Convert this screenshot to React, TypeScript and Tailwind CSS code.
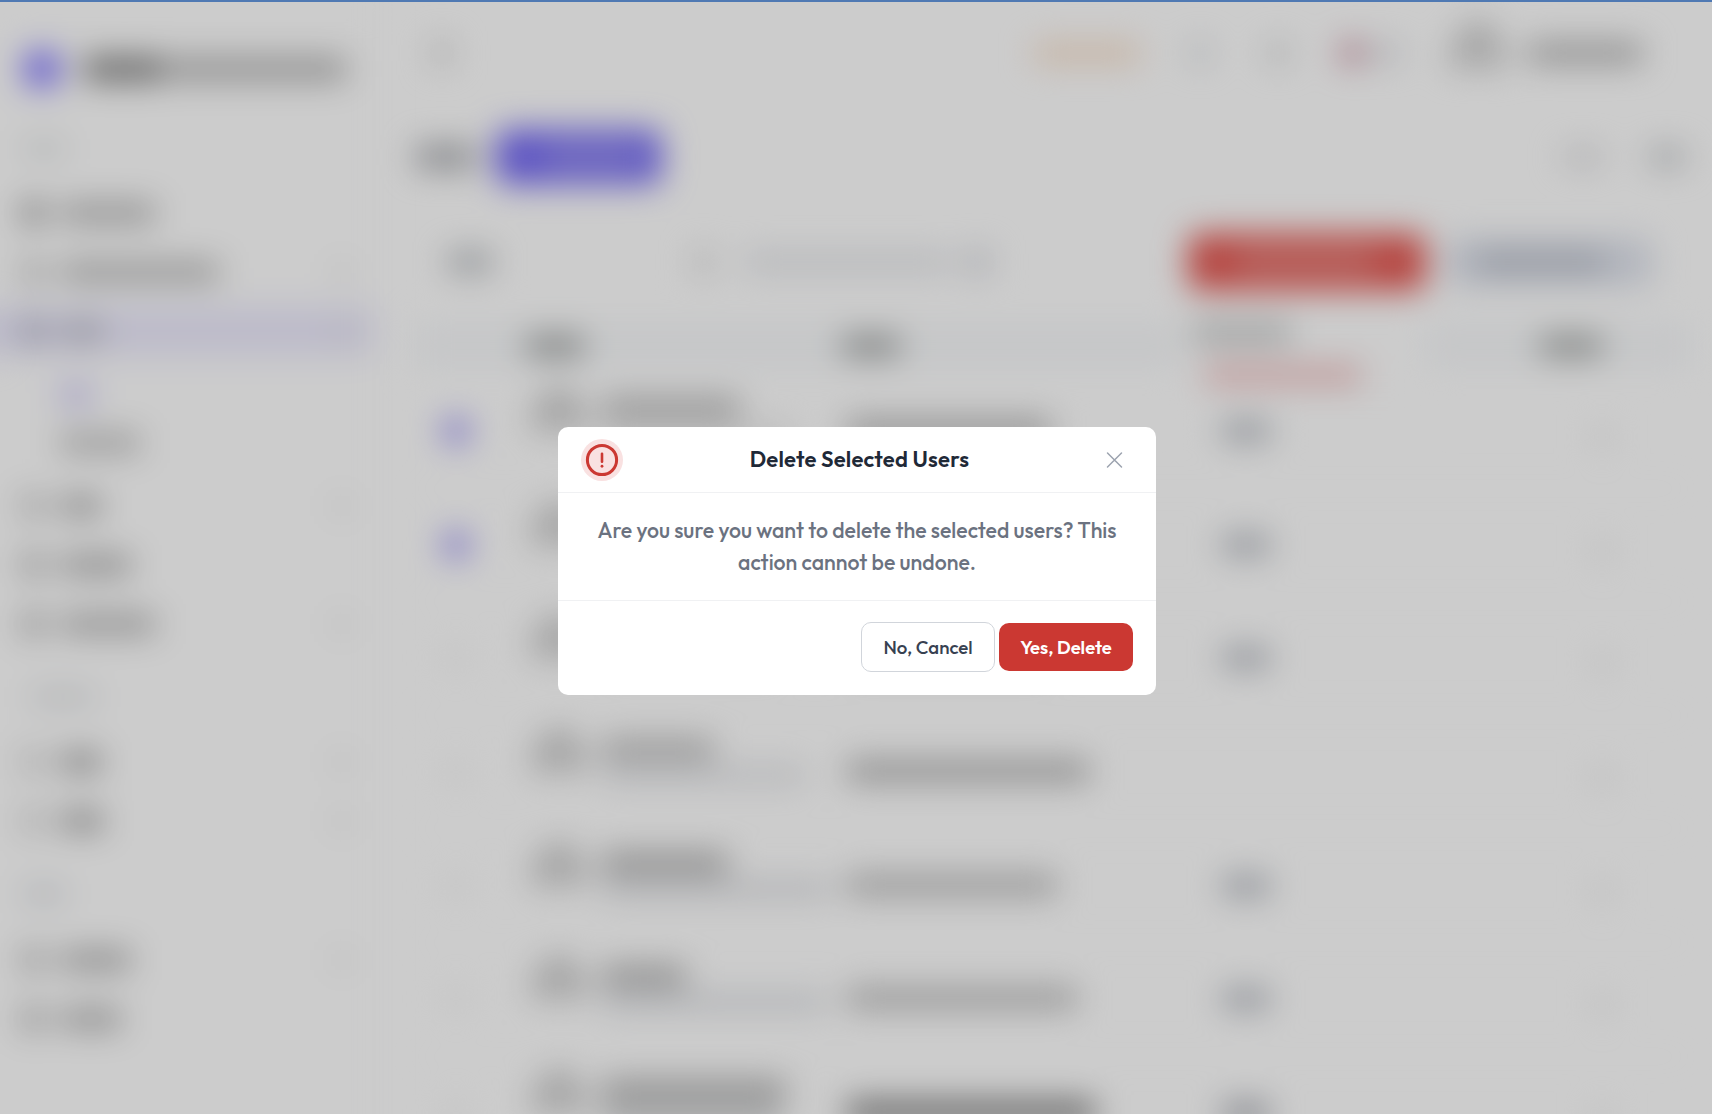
import React from "react";

/* Soft block standing in for an obscured element behind the backdrop. */
function Bar({ className = "" }: { className?: string }) {
  return <span aria-hidden="true" className={`block shrink-0 ${className}`} />;
}

function NavRow({ icon, label, active, chevron }: { icon: string; label: string; active?: boolean; chevron?: boolean }) {
  return (
    <div className="flex h-[59px] items-center">
      <div className={`flex h-[48px] w-[373px] items-center pl-[21px] ${active ? "bg-[#eceafd] shadow-[-40px_0_0_#eceafd]" : ""}`}>
        <Bar className={`h-6 w-6 ${icon}`} />
        <Bar className={`ml-4 h-5 ${label}`} />
        {chevron && <Bar className="mr-[25px] ml-auto h-3 w-3 bg-[#dcdcdc]" />}
      </div>
    </div>
  );
}

function Sidebar() {
  return (
    <aside className="h-full w-[380px] shrink-0 border-r border-[#f3f3f5] bg-white pt-px">
      <div className="flex h-[136px] items-center pl-[24px]">
        <Bar className="h-9 w-9 rounded-xl bg-[#8075ff]" />
        <Bar className="ml-6 h-6 w-[80px] bg-[#808080]" />
        <Bar className="ml-1 h-6 w-[178px] bg-[#b6b6b6]" />
      </div>
      <div className="flex h-[46px] items-start pt-1.5 pl-6">
        <Bar className="h-3 w-10 bg-[#d8dcdd]" />
      </div>
      <NavRow icon="bg-[#a4a4a4]" label="w-[94px] bg-[#b4b4b4]" />
      <NavRow icon="bg-[#cacaca]" label="w-[158px] bg-[#b8b8b8]" chevron />
      <NavRow icon="bg-[#b8b8c8]" label="w-[42px] bg-[#bcbcc8]" active chevron />
      <div className="flex h-[116px] flex-col gap-7 pt-[25px] pl-[60px]">
        <Bar className="h-5 w-8 bg-[#ccc6f8]" />
        <Bar className="h-5 w-20 bg-[#c0c0c0]" />
      </div>
      <NavRow icon="bg-[#c9c9c9]" label="w-[40px] bg-[#acacac]" chevron />
      <NavRow icon="bg-[#bcbcbc]" label="w-[70px] bg-[#b0b0b0]" />
      <NavRow icon="bg-[#bababa]" label="w-[94px] bg-[#b4b4b4]" chevron />
      <div className="flex h-[79px] items-center pt-2 pl-8">
        <Bar className="h-3 w-[62px] bg-[#d6d9dc]" />
      </div>
      <NavRow icon="bg-[#d8d8d8]" label="w-[40px] bg-[#a4a4a4]" chevron />
      <NavRow icon="bg-[#d8d8d8]" label="w-[42px] bg-[#a4a4a4]" chevron />
      <div className="flex h-[80px] items-center pt-2 pl-6">
        <Bar className="h-3 w-10 bg-[#d0d4da]" />
      </div>
      <NavRow icon="bg-[#c0c0c0]" label="w-[70px] bg-[#b0b0b0]" chevron />
      <NavRow icon="bg-[#bababa]" label="w-[60px] bg-[#b0b0b0]" />
    </aside>
  );
}

function TopBar() {
  return (
    <header className="flex h-[106px] items-center pr-[70px] pl-[52px]">
      <Bar className="h-6 w-5 bg-[#d8d8d8]" />
      <Bar className="ml-auto h-5 w-[106px] bg-[#f9e0ca]" />
      <Bar className="ml-[52px] h-5 w-4 bg-[#d3d8dc]" />
      <Bar className="ml-[60px] h-5 w-5 bg-[#d4d6d6]" />
      <Bar className="ml-[52px] h-6 w-6 rounded-full bg-[#c8889a]" />
      <Bar className="ml-2 h-4 w-7 bg-[#d6d8dd]" />
      <div className="ml-[48px] flex flex-col items-center pb-4">
        <Bar className="h-6 w-10 rounded-t-full bg-[#cccccc]" />
        <Bar className="h-6 w-[60px] bg-[#d4d4d4]" />
      </div>
      <Bar className="ml-5 h-5 w-[114px] bg-[#b0b0b0]" />
    </header>
  );
}

function TitleRow() {
  return (
    <div className="flex h-[101px] items-center pr-[27px] pl-[36px]">
      <Bar className="h-6 w-[60px] bg-[#aaacb1]" />
      <Bar className="ml-[20px] h-[56px] w-[48px] rounded-l-xl bg-[#766bf4]" />
      <div className="flex h-[56px] w-[118px] items-center rounded-r-xl bg-[#7a70f4]">
        <Bar className="h-4 w-[92px] bg-[#9d96ee]" />
      </div>
      <Bar className="ml-auto h-3.5 w-10 bg-[#d6d6d9]" />
      <Bar className="ml-[46px] h-[18px] w-9 bg-[#c4c7ca]" />
    </div>
  );
}

type Row = { checked?: boolean; name: string; sub: string; email: string; tag?: string };

const rows: Row[] = [
  { checked: true, name: "w-[138px] bg-[#b4b4b4]", sub: "w-[190px] bg-[#dedede]", email: "w-[204px] bg-[#adadad]", tag: "bg-[#acb1b9]" },
  { checked: true, name: "w-[120px] bg-[#b4b4b4]", sub: "w-[180px] bg-[#dedede]", email: "w-[204px] bg-[#adadad]", tag: "bg-[#acb1b9]" },
  { name: "w-[120px] bg-[#b4b4b4]", sub: "w-[180px] bg-[#dedede]", email: "w-[204px] bg-[#adadad]", tag: "bg-[#acb1b9]" },
  { name: "w-[112px] bg-[#b8b8b8]", sub: "w-[204px] bg-[#d5d7dc]", email: "w-[242px] bg-[#adadad]" },
  { name: "w-[126px] bg-[#aaaaaa]", sub: "w-[230px] bg-[#cdcfd4]", email: "w-[210px] bg-[#b8b8b8]", tag: "bg-[#acb1b9]" },
  { name: "w-[84px] bg-[#acacac]", sub: "w-[226px] bg-[#cdd0d6]", email: "w-[230px] bg-[#b8b8b8]", tag: "bg-[#acb1b9]" },
  { name: "w-[184px] bg-[#acacac]", sub: "w-[180px] bg-[#abaeb0]", email: "w-[248px] bg-[#707070]", tag: "bg-[#9a9da6]" },
];

function UsersCard() {
  return (
    <section className="ml-[36px] w-[1274px]">
      <div className="flex h-[110px] items-center pl-[32px]">
        <Bar className="h-5 w-11 bg-[#b6babe]" />
        <Bar className="ml-[202px] h-6 w-5 bg-[#dedede]" />
        <Bar className="ml-[30px] h-4 w-[208px] bg-[#dfe1e6]" />
        <Bar className="ml-[14px] h-6 w-6 bg-[#d6d8de]" />
        <div className="ml-[198px] flex h-[58px] w-[238px] shrink-0 items-center rounded-xl bg-[#e45a54] pl-12">
          <Bar className="h-5 w-[138px] bg-[#e68b86]" />
        </div>
        <div className="ml-[20px] flex h-[48px] w-[206px] shrink-0 items-center rounded-xl bg-[#dfe3ed] pl-8">
          <Bar className="h-5 w-[126px] bg-[#b9bec9]" />
        </div>
      </div>
      <div className="relative flex h-[58px] items-center bg-[linear-gradient(#fff_10px,#f7f9fb_10px,#f7f9fb_48px,#fff_48px)] pl-[110px]">
        <Bar className="h-5 w-[58px] bg-[#9c9f9e]" />
        <Bar className="ml-[258px] h-5 w-[58px] bg-[#9c9f9e]" />
        <Bar className="ml-[640px] h-5 w-[62px] bg-[#a0a3a1]" />
        <div className="absolute top-[-18px] left-[765px] flex h-[116px] w-[246px] flex-col bg-white pt-[24px] pl-[12px]">
          <Bar className="h-5 w-[98px] bg-[#c3c5c5]" />
          <Bar className="mt-[22px] ml-[12px] h-5 w-[156px] bg-[#f0c0c0]" />
        </div>
      </div>
      {rows.map((row, i) => (
        <div key={i} className="flex h-[113.6px] items-center border-b border-[#fafafb] pl-[28px]">
          <Bar className={`h-6 w-6 rounded-md ${row.checked ? "bg-[#9287f6]" : "bg-[#f7f7f7]"}`} />
          <div className="ml-[62px] flex flex-col items-center pb-11">
            <Bar className="h-5 w-10 rounded-t-full bg-[#cacaca]" />
            <Bar className="h-6 w-[58px] bg-[#d0d0d0]" />
          </div>
          <div className="ml-[14px] flex w-[245px] flex-col gap-2.5 pb-6">
            <Bar className={`h-5 ${row.name}`} />
            <Bar className={`h-3 ${row.sub}`} />
          </div>
          <div className="w-[375px] pb-0.5">
            <Bar className={`h-5 ${row.email}`} />
          </div>
          <Bar className={`h-[18px] w-[48px] ${row.tag ?? ""}`} />
          <Bar className="mt-3 ml-[322px] h-5 w-5 bg-[#f0f0f0]" />
        </div>
      ))}
    </section>
  );
}

function ConfirmDialog() {
  return (
    <div
      role="dialog"
      aria-modal="true"
      className="mt-[8px] ml-[2px] flex h-[268px] w-[598px] flex-col rounded-[10px] bg-white font-['Outfit',Lato,sans-serif]"
    >
      <div className="flex h-[66px] shrink-0 items-center justify-between border-b border-[#f0f1f3] pr-[32px] pl-[23px]">
        <span className="flex size-[42px] items-center justify-center rounded-full bg-[#f9e1e1]">
          <svg width="34" height="34" viewBox="0 0 34 34" fill="none" stroke="#cb3832" strokeLinecap="round">
            <circle cx="17" cy="17" r="14.6" strokeWidth="3" />
            <path d="M17 10.7v8" strokeWidth="2.6" />
            <path d="M17 23.2v.1" strokeWidth="2.8" />
          </svg>
        </span>
        <h2 className="mr-[10px] pb-px text-[22px] leading-7 font-semibold tracking-[0.2px] whitespace-nowrap text-[#1f2937]">
          Delete Selected Users
        </h2>
        <button type="button" aria-label="Close" className="flex size-[18px] items-center justify-center">
          <svg width="18" height="18" viewBox="0 0 18 18" stroke="#9ca3af" strokeWidth="1.5" strokeLinecap="round">
            <path d="M1.5 2l14 14M15.500 2L1.5 16" />
          </svg>
        </button>
      </div>
      <div className="flex h-[108px] shrink-0 items-center justify-center border-b border-[#f0f1f3] pt-px">
        <p className="text-center text-[21.3px] leading-8 font-medium whitespace-nowrap text-[#6b7280]">
          Are you sure you want to delete the selected users? This
          <br />
          action cannot be undone.
        </p>
      </div>
      <div className="flex flex-1 items-center justify-end gap-1 pr-[23px] pb-[2px]">
        <button type="button" className="h-[50px] w-[134px] rounded-[10px] border border-[#d1d5db] bg-white text-[18.67px] font-medium whitespace-nowrap text-[#374151]">
          No, Cancel
        </button>
        <button type="button" className="h-[48px] w-[134px] rounded-[10px] bg-[#cb3832] pt-0.5 text-[18.4px] font-semibold whitespace-nowrap text-white">
          Yes, Delete
        </button>
      </div>
    </div>
  );
}

export default function App() {
  return (
    <div className="relative h-[1114px] w-[1712px] overflow-hidden bg-white">
      <div className="flex h-[1220px] blur-[16px]">
        <Sidebar />
        <main className="h-full flex-1">
          <TopBar />
          <TitleRow />
          <UsersCard />
        </main>
      </div>
      <div className="absolute inset-0 flex items-center justify-center bg-black/20">
        <ConfirmDialog />
      </div>
      <div className="absolute inset-x-0 top-0 h-[2px] bg-[#4f79b3]" />
    </div>
  );
}
